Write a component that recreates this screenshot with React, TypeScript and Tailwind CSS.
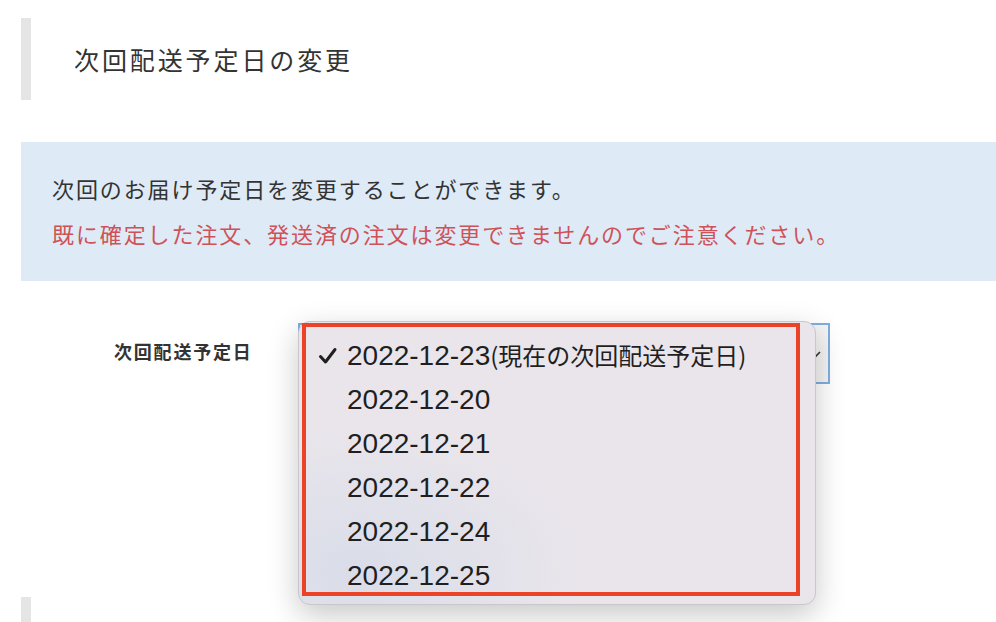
import React from 'react';

const jp = { fontFamily: '"Noto Sans CJK JP", "Noto Sans", sans-serif' };
const menuFont = { fontFamily: '"Liberation Sans", "Noto Sans CJK JP", sans-serif' };

const options = [
  { value: '2022-12-23', note: '(現在の次回配送予定日)', checked: true },
  { value: '2022-12-20' },
  { value: '2022-12-21' },
  { value: '2022-12-22' },
  { value: '2022-12-24' },
  { value: '2022-12-25' },
];

function Check() {
  return (
    <svg width="20" height="20" viewBox="0 0 20 20" className="shrink-0">
      <path d="M2.5 10.5 L7.5 16 L17 3.5" fill="none" stroke="#1f1f1f" strokeWidth="3" strokeLinecap="round" strokeLinejoin="round" />
    </svg>
  );
}

export default function App() {
  return (
    <div className="w-[996px] h-[622px] overflow-hidden bg-white text-[#333]" style={jp}>
      {/* Section heading */}
      <div className="pt-[18px] pl-[21px]">
        <div className="h-[82px] border-l-[10px] border-[#e5e5e5] flex items-center pl-[43px]">
          <h2 className="text-[25px] tracking-[2.9px] font-normal leading-none text-[#333]">次回配送予定日の変更</h2>
        </div>
      </div>

      {/* Notice box */}
      <div className="mt-[42px] ml-[21px] h-[139px] bg-[#deebf6] pl-[31px] pt-[23px]">
        <p className="text-[22px] tracking-[1.9px] leading-[46px] text-[#333]">次回のお届け予定日を変更することができます。</p>
        <p className="text-[22px] tracking-[1.9px] leading-[46px] text-[#cf5258] -mt-[1px]">
          既に確定した注文、発送済の注文は変更できませんのでご注意ください。
        </p>
      </div>

      {/* Form row */}
      <div className="mt-[42px] ml-[21px] flex">
        <div className="w-[277px] pl-[93px] pt-[17px]">
          <span className="text-[18px] font-bold tracking-[1.8px] text-[#333] leading-none">次回配送予定日</span>
        </div>
        <div className="relative">
          <div className="w-[532px] h-[61px] border-2 border-[#7eaee0] bg-[#f4f4f4] flex items-center justify-end pr-[6px]">
            <svg width="12" height="12" viewBox="0 0 12 12">
              <path d="M2 4 L6 8 L10 4" fill="none" stroke="#333" strokeWidth="1.6" />
            </svg>
          </div>

          {/* Open dropdown menu */}
          <div
            className="absolute left-0 -top-[2px] w-[518px] h-[284px] rounded-[12px] border border-[#c9c6cc] shadow-[0_10px_30px_rgba(0,0,0,0.22)] pt-[12px]"
            style={{
              background:
                'radial-gradient(ellipse 220px 140px at 60px 250px, #d9dde9 0%, rgba(233,229,235,0) 100%), #e9e5eb',
            }}
          >
            <ul style={menuFont} className="text-[#1f1f1f]">
              {options.map((o) => (
                <li key={o.value} className="h-[44px] flex items-center">
                  <span className="w-[48px] flex justify-end pr-[9px]">{o.checked && <Check />}</span>
                  <span className="text-[28px] leading-none">
                    {o.value}
                    {o.note && <span className="text-[24px]" style={jp}>{o.note}</span>}
                  </span>
                </li>
              ))}
            </ul>
            {/* annotation highlight */}
            <div className="absolute left-[3px] top-[1px] w-[498px] h-[273px] border-4 border-[#ea4328] pointer-events-none" />
          </div>
        </div>
      </div>

      {/* Next section heading bar */}
      <div className="mt-[213px] ml-[21px] h-[30px] border-l-[10px] border-[#e5e5e5]" />
    </div>
  );
}
